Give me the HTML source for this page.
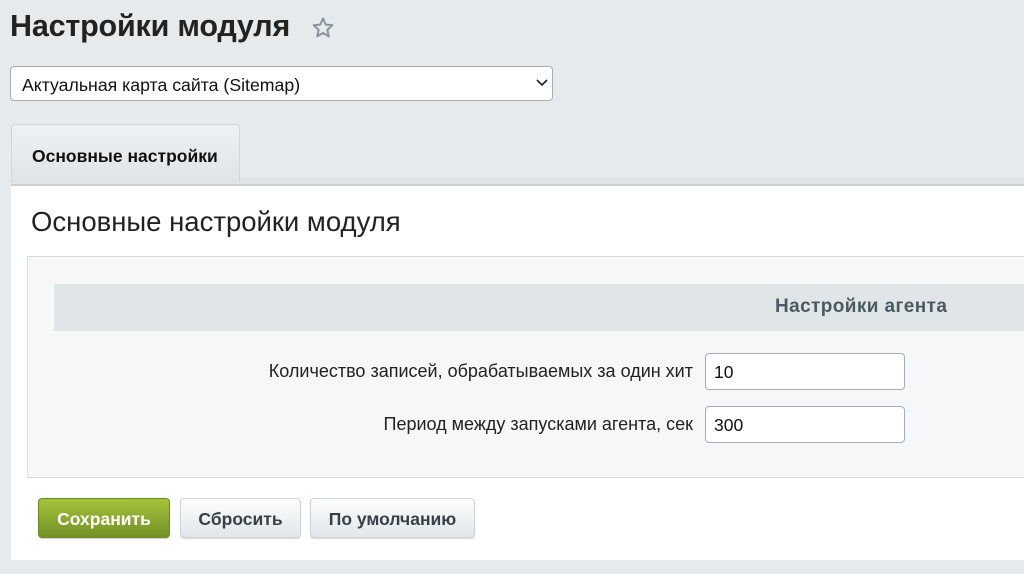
<!DOCTYPE html>
<html><head><meta charset="utf-8"><style>
*{box-sizing:border-box;margin:0;padding:0}
body{width:1024px;height:574px;overflow:hidden;background:#e6eaec;font-family:"Liberation Sans",sans-serif;position:relative;color:#333}
.abs{position:absolute}
h1{position:absolute;left:10px;top:9px;font-size:30.5px;font-weight:bold;color:#222;letter-spacing:-0.2px}
.sel{left:10px;top:66px;width:543px;height:35px;background:#fff;border:1px solid #a8adb2;border-radius:4px;font-size:17.7px;padding:8px 11px;color:#111}
.tab{left:11px;top:124px;width:229px;height:58px;background:linear-gradient(#eef1f3,#dfe4e7);border:1px solid #cfd5d9;border-bottom:none;border-radius:4px 4px 0 0;font-size:17.5px;font-weight:bold;color:#111;padding:21px 0 0 20px}
.line{left:11px;top:178px;width:1013px;height:8px;background:#dfe4e7;border-bottom:2px solid #c9cfd3}
.panel{left:11px;top:186px;width:1013px;height:374px;background:#fff}
.gray{left:27px;top:256px;width:997px;height:222px;background:#f5f7f8;border-top:1px solid #d5dadd;border-bottom:1px solid #d5dadd;border-left:1px solid #e0e4e6}
.hdr{left:54px;top:284px;width:970px;height:47px;background:#e0e5e8;font-size:19px;letter-spacing:0.4px;font-weight:bold;color:#4b5a62;padding:12px 0 0 721px;white-space:nowrap}
.lbl{font-size:18px;color:#222;text-align:right;width:500px;white-space:nowrap}
.inp{width:200px;height:37px;background:#fff;border:1px solid #a8adb2;border-radius:4px;font-size:17.5px;padding:8px 8px;color:#111}
.btn{top:498px;height:40px;border-radius:4px;font-size:17.5px;font-weight:bold;text-align:center;padding-top:10px;white-space:nowrap}
.g{background:linear-gradient(#a5c23a,#739127);color:#fff;border:1px solid #6b8a22;box-shadow:0 1px 1px rgba(0,0,0,.2)}
.w{background:linear-gradient(#fdfefe,#e1e6e9);color:#384047;border:1px solid #cdd3d7;box-shadow:0 1px 1px rgba(0,0,0,.15)}
</style></head><body>
<h1>Настройки модуля</h1>
<svg class="abs" style="left:311px;top:16px" width="24" height="24" viewBox="0 0 24 24"><path d="M12 2.5l2.8 6.1 6.6.7-5 4.5 1.4 6.6L12 17l-5.8 3.4 1.4-6.6-5-4.5 6.6-.7z" fill="none" stroke="#8a939a" stroke-width="2" stroke-linejoin="round"/></svg>
<div class="abs sel">Актуальная карта сайта (Sitemap)</div>
<svg class="abs" style="left:536px;top:78px" width="12" height="10" viewBox="0 0 12 10"><path d="M1 2l5 5 5-5" fill="none" stroke="#222" stroke-width="1.6"/></svg>
<div class="abs line"></div>
<div class="abs tab">Основные настройки</div>
<div class="abs panel"></div>
<div class="abs" style="left:31px;top:206px;font-size:27.5px;color:#222">Основные настройки модуля</div>
<div class="abs gray"></div>
<div class="abs hdr">Настройки агента</div>
<div class="abs lbl" style="left:193px;top:361px">Количество записей, обрабатываемых за один хит</div>
<div class="abs inp" style="left:705px;top:353px">10</div>
<div class="abs lbl" style="left:193px;top:414px">Период между запусками агента, сек</div>
<div class="abs inp" style="left:705px;top:406px">300</div>
<div class="abs btn g" style="left:38px;width:132px">Сохранить</div>
<div class="abs btn w" style="left:180px;width:121px">Сбросить</div>
<div class="abs btn w" style="left:310px;width:165px">По умолчанию</div>
</body></html>
